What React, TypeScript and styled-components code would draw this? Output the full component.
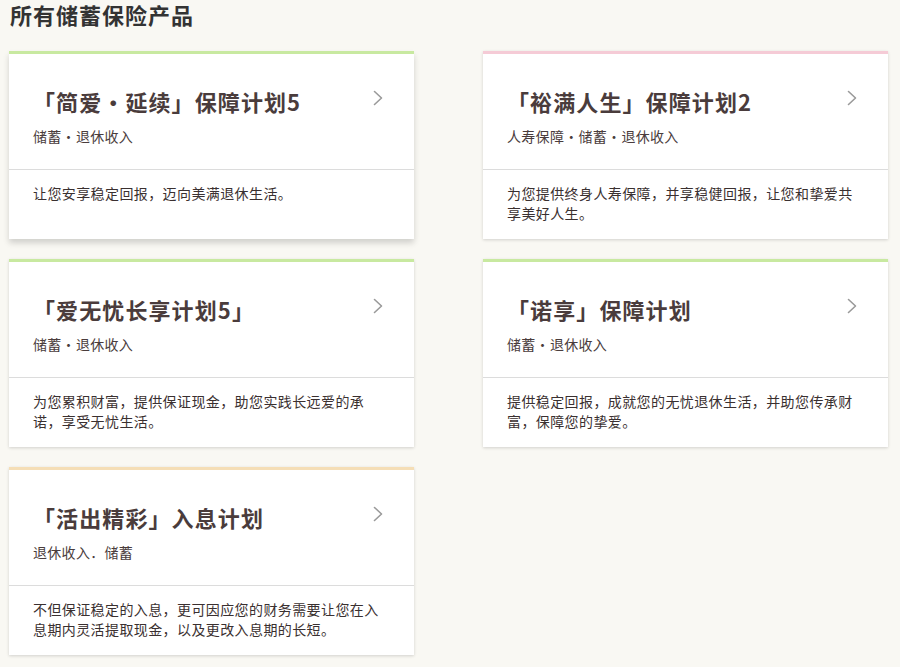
import React from "react";
import styled, { createGlobalStyle } from "styled-components";

const GlobalStyle = createGlobalStyle`
  html, body {
    margin: 0;
    padding: 0;
    background: #f9f8f3;
  }
  body {
    font-family: "Noto Sans CJK SC", "Noto Sans", sans-serif;
    color: #333;
  }
`;

const Page = styled.div`
  width: 900px;
  min-height: 667px;
  background: #f9f8f3;
  box-sizing: border-box;
  padding-top: 1px;
`;

const Heading = styled.h2`
  margin: 0 0 24px 0;
  padding-left: 10px;
  font-size: 22px;
  line-height: 26px;
  letter-spacing: 1px;
  font-weight: 700;
  color: #333;
`;

const Grid = styled.div`
  display: grid;
  grid-template-columns: 405px 405px;
  column-gap: 69px;
  row-gap: 20px;
  padding: 0 12px 0 9px;
`;

const Card = styled.div<{ $accent: string; $lifted?: boolean }>`
  background: #fff;
  border-top: 3px solid ${(p) => p.$accent};
  box-shadow: ${(p) =>
    p.$lifted
      ? "0 4px 6px rgba(0,0,0,0.16)"
      : "0 1px 3px rgba(0,0,0,0.16)"};
  display: flex;
  flex-direction: column;
  cursor: pointer;
`;

const Top = styled.div`
  padding: 32px 24px 23px 24px;
  border-bottom: 1px solid #dcdcdc;
`;

const TitleRow = styled.div`
  display: flex;
  justify-content: space-between;
  align-items: flex-start;
`;

const Title = styled.div`
  font-size: 22px;
  line-height: 30px;
  font-weight: 700;
  color: #4a3c3c;
  letter-spacing: 1.1px;
`;

const Chevron = styled.svg`
  flex: none;
  width: 10px;
  height: 16px;
  margin-top: 4px;
  margin-right: 7px;
`;

const Tags = styled.div`
  margin-top: 10px;
  font-size: 14px;
  line-height: 20px;
  letter-spacing: 0.3px;
  color: #4a3c3c;
`;

const Desc = styled.div`
  flex: 1;
  padding: 13px 24px 16px 24px;
  font-size: 14px;
  line-height: 20px;
  letter-spacing: 0.4px;
  color: #3a3030;
`;

type Product = {
  title: string;
  tags: string;
  desc: string;
  accent: string;
  lifted?: boolean;
};

const products: Product[] = [
  {
    title: "「简爱·延续」保障计划5",
    tags: "储蓄·退休收入",
    desc: "让您安享稳定回报，迈向美满退休生活。",
    accent: "#c8e9a0",
    lifted: true,
  },
  {
    title: "「裕满人生」保障计划2",
    tags: "人寿保障·储蓄·退休收入",
    desc: "为您提供终身人寿保障，并享稳健回报，让您和挚爱共享美好人生。",
    accent: "#f5cbd6",
  },
  {
    title: "「爱无忧长享计划5」",
    tags: "储蓄·退休收入",
    desc: "为您累积财富，提供保证现金，助您实践长远爱的承诺，享受无忧生活。",
    accent: "#c8e9a0",
  },
  {
    title: "「诺享」保障计划",
    tags: "储蓄·退休收入",
    desc: "提供稳定回报，成就您的无忧退休生活，并助您传承财富，保障您的挚爱。",
    accent: "#c8e9a0",
  },
  {
    title: "「活出精彩」入息计划",
    tags: "退休收入．储蓄",
    desc: "不但保证稳定的入息，更可因应您的财务需要让您在入息期内灵活提取现金，以及更改入息期的长短。",
    accent: "#f5deb6",
  },
];

const ChevronIcon = () => (
  <Chevron viewBox="0 0 10 16" fill="none">
    <polyline
      points="1.5,1.5 8.5,8 1.5,14.5"
      stroke="#9a9a9a"
      strokeWidth="1.6"
      strokeLinecap="round"
      strokeLinejoin="round"
    />
  </Chevron>
);

export default function App() {
  return (
    <Page>
      <GlobalStyle />
      <Heading>所有储蓄保险产品</Heading>
      <Grid>
        {products.map((p) => (
          <Card key={p.title} $accent={p.accent} $lifted={p.lifted}>
            <Top>
              <TitleRow>
                <Title>{p.title}</Title>
                <ChevronIcon />
              </TitleRow>
              <Tags>{p.tags}</Tags>
            </Top>
            <Desc>{p.desc}</Desc>
          </Card>
        ))}
      </Grid>
    </Page>
  );
}
